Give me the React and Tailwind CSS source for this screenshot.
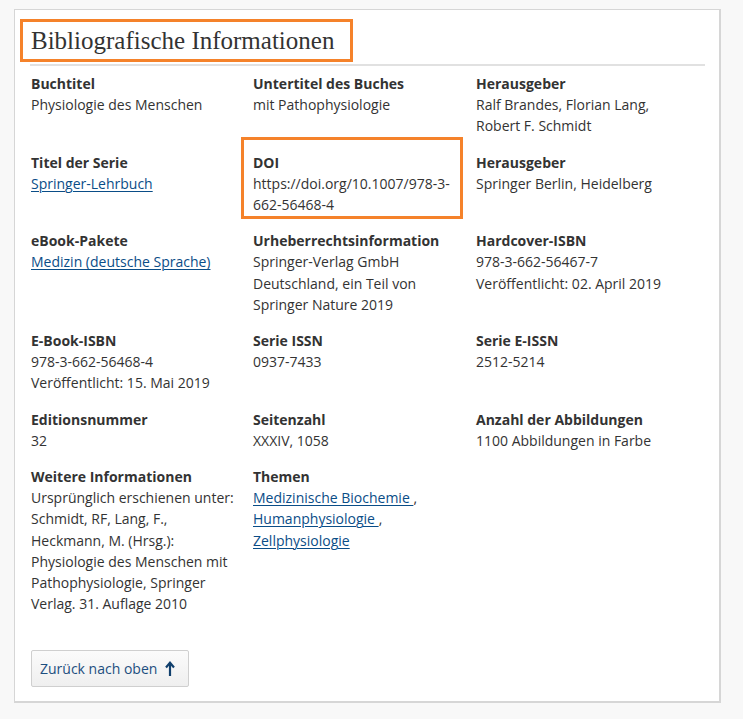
import React from "react";

const sans = { fontFamily: '"Open Sans", "Noto Sans", sans-serif' };

function Label({ children }) {
  return <div className="font-bold text-[#333333]">{children}</div>;
}

function A({ children }) {
  return (
    <a href="#" className="text-[#0a4d87] underline underline-offset-2 decoration-1">
      {children}
    </a>
  );
}

function Item({ label, children, highlight }) {
  return (
    <div className="relative">
      {highlight && (
        <span className="pointer-events-none absolute left-[-12px] top-[-15px] h-[82px] w-[222px] border-[3px] border-[#f5822a]" />
      )}
      <Label>{label}</Label>
      <div className="text-[#333333]">{children}</div>
    </div>
  );
}

export default function App() {
  return (
    <div className="min-h-[719px] w-[743px] bg-[#f8f8f8] pt-[9px] pl-[14px]" style={sans}>
      <div className="w-[707px] border border-[#d6d6d6] border-r-2 border-b-2 bg-white px-[15px] pt-[16px] pb-[14px] text-[14px] leading-[21.2px]">
        <div className="relative">
          <span className="pointer-events-none absolute left-[-10px] top-[-7px] h-[43px] w-[333px] border-[3px] border-[#f5822a]" />
          <h2
            className="pl-[1px] text-[25px] leading-[30px] text-[#333333]"
            style={{ fontFamily: '"Liberation Serif", "Times New Roman", serif' }}
          >
            Bibliografische Informationen
          </h2>
        </div>
        <div className="mt-[8px] h-[2px] w-[675px] bg-[#e1e1e1]" />
        <div className="mt-[7px] grid grid-cols-[222px_223px_1fr] gap-y-[15px] pl-[1px]">
          <Item label="Buchtitel">Physiologie des Menschen</Item>
          <Item label="Untertitel des Buches">mit Pathophysiologie</Item>
          <Item label="Herausgeber">
            Ralf Brandes, Florian Lang,
            <br />
            Robert F. Schmidt
          </Item>

          <Item label="Titel der Serie">
            <A>Springer-Lehrbuch</A>
          </Item>
          <Item label="DOI" highlight>
            https://doi.org/10.1007/978-3-
            <br />
            662-56468-4
          </Item>
          <Item label="Herausgeber">Springer Berlin, Heidelberg</Item>

          <Item label="eBook-Pakete">
            <A>Medizin (deutsche Sprache)</A>
          </Item>
          <Item label="Urheberrechtsinformation">
            Springer-Verlag GmbH
            <br />
            Deutschland, ein Teil von
            <br />
            Springer Nature 2019
          </Item>
          <Item label="Hardcover-ISBN">
            978-3-662-56467-7
            <br />
            Veröffentlicht: 02. April 2019
          </Item>

          <Item label="E-Book-ISBN">
            978-3-662-56468-4
            <br />
            Veröffentlicht: 15. Mai 2019
          </Item>
          <Item label="Serie ISSN">0937-7433</Item>
          <Item label="Serie E-ISSN">2512-5214</Item>

          <Item label="Editionsnummer">32</Item>
          <Item label="Seitenzahl">XXXIV, 1058</Item>
          <Item label="Anzahl der Abbildungen">1100 Abbildungen in Farbe</Item>

          <Item label="Weitere Informationen">
            Ursprünglich erschienen unter:
            <br />
            Schmidt, RF, Lang, F.,
            <br />
            Heckmann, M. (Hrsg.):
            <br />
            Physiologie des Menschen mit
            <br />
            Pathophysiologie, Springer
            <br />
            Verlag. 31. Auflage 2010
          </Item>
          <Item label="Themen">
            <A>Medizinische Biochemie </A>,
            <br />
            <A>Humanphysiologie </A>,
            <br />
            <A>Zellphysiologie</A>
          </Item>
          <div />
        </div>
        <button
          type="button"
          className="mt-[36px] ml-[1px] flex h-[37px] w-[158px] items-center rounded-[2px] border border-[#cfcfcf] bg-gradient-to-b from-[#fbfbfb] to-[#efefef] pl-[8px] text-[14px] text-[#1d4f80]"
          style={sans}
        >
          <span>Zurück nach oben</span>
          <svg className="ml-[8px]" width="10" height="16" viewBox="0 0 10 16" fill="none">
            <path d="M5 15V2.5" stroke="#11406d" strokeWidth="2.2" />
            <path d="M1 6.5L5 1.8L9 6.5" stroke="#11406d" strokeWidth="2.2" strokeLinejoin="miter" />
          </svg>
        </button>
      </div>
    </div>
  );
}
